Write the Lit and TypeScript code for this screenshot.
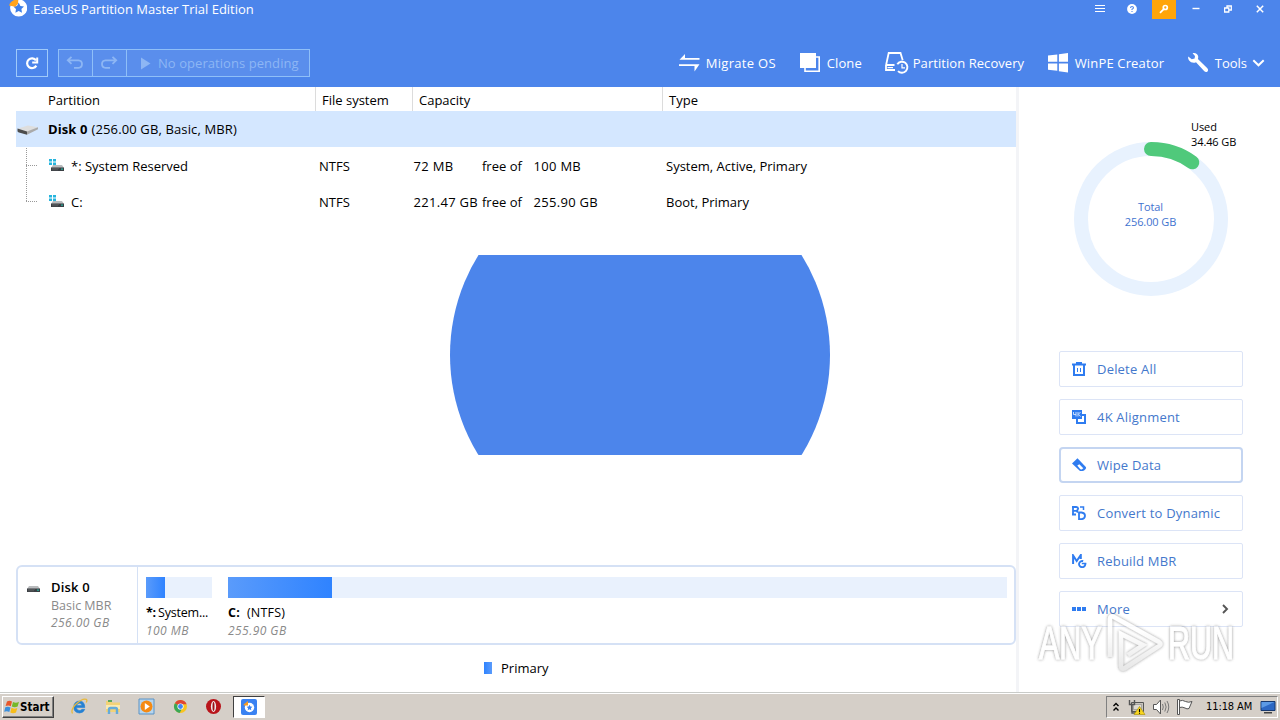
import { LitElement, html, css, svg } from "lit";
import { customElement, property } from "lit/decorators.js";

interface Partition {
    name: string;
    fs: string;
    free: string;
    total: string;
    type: string;
}

const partitions: Partition[] = [
    { name: "*: System Reserved", fs: "NTFS", free: "72 MB", total: "100 MB", type: "System, Active, Primary" },
    { name: "C:", fs: "NTFS", free: "221.47 GB", total: "255.90 GB", type: "Boot, Primary" },
];

const icons: Record<string, any> = {
    migrate: html`<svg width="22" height="22" viewBox="0 0 22 22">
      <path d="M.5 7.800 6 2v4h14.500v1.800zM0 12.200h20.500L15.500 19.500v-5.500H0z" fill="#fff"/></svg>`,
    clone: html`<svg width="22" height="22" viewBox="0 0 22 22">
      <path d="M5 16v3.200h14.200V5H16" fill="none" stroke="#fff" stroke-width="1.600"/>
      <path d="M0 1h16v15H0z" fill="#fff"/></svg>`,
    recovery: html`<svg width="24" height="24" viewBox="0 0 24 24" fill="none" stroke="#fff">
      <path d="M1.200 13.500 3.700 2h11.800l2.200 7.200M1 13.500V19h9M1 14h8.500" stroke-width="1.800"/>
      <path d="M2.500 16.600h5.500" stroke-width="1.200"/>
      <path d="M12.300 13.200A5.500 5.500 0 1 1 13 20.100" stroke-width="1.900"/>
      <path d="M17 13v3.800h3" stroke-width="1.200"/></svg>`,
    winpe: html`<svg width="22" height="22" viewBox="0 0 22 22" fill="#fff">
      <path d="M0 3.600 9.300 2.600v7.200H0zM10.900 2.300 20 1v8.800h-9.100zM0 11.600h9.300v7.200L0 17.800zM10.900 11.600H20v9l-9.100-1.400z"/></svg>`,
    tools: html`<svg width="22" height="22" viewBox="0 0 22 22" fill="#fff">
      <path d="M4.600 1.200C7.300.4 9.800 2 10.200 4.500c.1.9 0 1.800-.3 2.600l9.200 8.800c1.300 1.300 1.200 2.700.4 3.500-.9.9-2.400.8-3.400-.3L8 10.200C5.700 11.300 2.600 10.600.9 8.200.2 7 0 5.600.2 4.400l3.600 2.900 2.800-.7.4-2.600z"/></svg>`,
    delete: html`<svg width="14" height="14" viewBox="0 0 14 14" fill="none" stroke="#2f7cf0">
      <path d="M0 2.500h14M4 1h6" stroke-width="2"/><path d="M2 3v10h10V3" stroke-width="2"/>
      <path d="M5.500 6v4M8.500 6v4"/></svg>`,
    align: html`<svg width="14" height="14" viewBox="0 0 14 14">
      <path d="M5 7v6h8V5H8" fill="none" stroke="#2f7cf0" stroke-width="2"/>
      <path d="M0 0h10v9H0z" fill="#2f7cf0"/>
      <path d="M1.500 2v2.500H4M4 2v4.500M6 2v4.500M8.500 2 6.500 4.200 8.500 6.500" fill="none" stroke="#d8e8ff" stroke-width=".9"/></svg>`,
    wipe: html`<svg width="15" height="14" viewBox="0 0 15 14">
      <path d="M5.500.3 13.800 9q.8 1-.2 2l-1.200 1.200q-.8.8-2 .8H8L0 5.500z" fill="#2f7cf0"/>
      <path d="M5.300 7.500 7.300 6.300 11.300 10.300 9.700 11.500 8.300 11.200z" fill="#fff"/></svg>`,
    convert: html`<svg width="14" height="14" viewBox="0 0 14 14" fill="none" stroke="#2f7cf0" stroke-width="1.800">
      <path d="M1 1v8M0 1h4.200q2 .3 1.900 1.700Q6 4.500 4 4.800H1M4 4.800q1.600.2 1.600 2M0 8.500h4"/>
      <path d="M7 13.200V6.500h2.500q3.500.3 3.500 3.300T9.500 13.200z"/><path d="M8 1h3.500v3" stroke-width="1.500"/></svg>`,
    rebuild: html`<svg width="15" height="14" viewBox="0 0 15 14" fill="none" stroke="#2f7cf0">
      <path d="M1.100 10V1.500L4.700 7 8.800 1v4" stroke-width="2"/>
      <path d="M13.200 9.500a3.100 3.100 0 1 1-2-2.300" stroke-width="1.900"/><path d="M9.800 9.500h4.500" stroke-width="1.500"/></svg>`,
    more: html`<svg width="14" height="14" viewBox="0 0 14 14" fill="#2f7cf0">
      <path d="M0 5h4v4H0zM5 5h4v4H5zM10 5h4v4h-4z"/></svg>`,
};

// small drive glyph; the Windows mark is drawn only for volumes
const drive = (win: boolean) => html`<svg width="16" height="14" viewBox="0 0 16 14">
  ${win ? svg`<path d="M0 0h3v2.500H0zM4 0h3v2.500H4zM0 3.500h3V6H0zM4 3.500h3V6H4z" fill="#25b4dd"/>` : ""}
  <path d="M4 6h9l2 3H2z" fill="#b9bbbd"/>
  <path d="M2 8.500h13V12H2z" fill="#3b3f44"/>
  <path d="M3 9.300h7M3 10.800h6" stroke="#777" stroke-width=".5"/>
  <path d="M12 9.600h2v1.200h-2z" fill="#27b09b"/>
</svg>`;

@customElement("action-button")
export class ActionButton extends LitElement {
    @property({ type: String }) icon = "";
    @property({ type: String }) label = "";
    @property({ type: Boolean }) active = false;
    @property({ type: Boolean }) arrow = false;

    static styles = css`
    :host { display: block; }
    .btn {
      box-sizing: border-box;
      height: 36px;
      display: flex;
      align-items: center;
      border: 1px solid #dce4f6;
      border-radius: 2px;
      padding: 0 13px 0 12px;
      color: #4478cc;
      font: 13px "Open Sans", "Noto Sans", sans-serif;
      letter-spacing: 0.2px;
    }
    .btn.active {
      border: 2px solid #c4d5f1;
      border-radius: 4px;
      padding: 0 12px 0 11px;
    }
    .icon { width: 25px; height: 14px; }
    .label { flex: 1; }
  `;

    render() {
        return html`
      <div class="btn ${this.active ? "active" : ""}">
        <span class="icon">${icons[this.icon]}</span>
        <span class="label">${this.label}</span>
        ${this.arrow ? html`<svg width="8" height="10" viewBox="0 0 8 10">
          <path d="M2 1l4 4-4 4" fill="none" stroke="#555" stroke-width="1.900"/></svg>` : ""}
      </div>
    `;
    }
}

@customElement("task-bar")
export class TaskBar extends LitElement {
    static styles = css`
    :host { display: block; }
    .bar {
      box-sizing: border-box;
      height: 28px;
      background: #d5cfc8;
      border-top: 1px solid #c9cbc8;
      box-shadow: inset 0 1px #fff;
      display: flex;
      align-items: center;
      padding: 2px 2px 2px;
      font: 11px "DejaVu Sans Condensed", "DejaVu Sans", sans-serif;
      color: #000;
    }
    .start {
      box-sizing: border-box;
      width: 52px;
      height: 22px;
      display: flex;
      align-items: center;
      padding-left: 1px;
      border: 1px solid;
      border-color: #fff #404040 #404040 #fff;
      box-shadow: inset -1px -1px #808080;
      font-weight: bold;
      font-size: 11.5px;
    }
    .quick { display: flex; align-items: center; margin-left: 17px; gap: 16.5px; }
    .quick svg { display: block; }
    .running {
      box-sizing: border-box;
      width: 32px;
      height: 22px;
      margin-left: 11px;
      display: flex;
      align-items: center;
      justify-content: center;
      background: #fff;
      border: 1px solid;
      border-color: #404040 #fff #fff #404040;
    }
    .tray {
      box-sizing: border-box;
      margin-left: auto;
      width: 172px;
      height: 22px;
      display: flex;
      align-items: center;
      border: 1px solid;
      border-color: #808080 #fff #fff #808080;
      padding-left: 5px;
    }
    .tray svg { display: block; flex: none; }
    .clock { width: 54px; padding-left: 11px; letter-spacing: -0.1px; white-space: nowrap; }
  `;

    render() {
        return html`
      <div class="bar">
        <div class="start">
          <svg width="16" height="16" viewBox="0 0 16 16">
            <path d="M3 2.500Q5.500 1 8 2.600L6.800 7.200Q4.500 5.800 1.600 7z" fill="#e8572a"/>
            <path d="M9 3Q12 4.500 15 2.800L13.600 7.600Q10.500 9 7.800 7.500z" fill="#76b82a"/>
            <path d="M1.300 8.200Q4 7 6.500 8.500L5.300 13Q3 11.800.2 12.800z" fill="#3b8fdc"/>
            <path d="M7.500 8.800Q10 10.400 13.300 8.900L12 13.500Q9 15 6.300 13.400z" fill="#f7bd1a"/>
          </svg>
          <span>Start</span>
        </div>
        <div class="quick">
          <svg width="17" height="17" viewBox="0 0 17 17">
            <path d="M13.800 9.500H5.500q.2 3 3 3 1.700 0 2.400-1.200h2.900Q12.600 15 8.400 15 2.800 14.700 2.800 9T8.600 3q5 0 5.200 6.500zM5.600 7.600h5.300Q10.600 5.300 8.400 5.300T5.600 7.600z" fill="#2581d3" stroke="#2581d3" stroke-width=".6"/>
            <path d="M1.500 15.500Q-.5 12 4.500 6.500 11.500-.2 15.300 1.300q1.200.8-.1 3.200" fill="none" stroke="#e8b93b" stroke-width="1.300"/>
          </svg>
          <svg width="17" height="17" viewBox="0 0 17 17">
            <path d="M1 3h5l1.500 1.500H15V14H1z" fill="#f2d277"/><path d="M3 2h4v2H3z" fill="#5aa75b"/>
            <path d="M1 7h14v4H1z" fill="#faeab1"/>
            <path d="M4 16v-4.500q0-1.500 1.500-1.500h5q1.500 0 1.500 1.500V16" fill="none" stroke="#65abd9" stroke-width="2.400"/>
          </svg>
          <svg width="17" height="17" viewBox="0 0 17 17">
            <path d="M1 1h15v15H1z" fill="#b6d5ee" stroke="#5a93c5"/>
            <circle cx="8.500" cy="8.500" r="6" fill="#f58a13"/><path d="M6.800 5v7l5-3.500z" fill="#fff"/>
          </svg>
          <svg width="17" height="17" viewBox="0 0 17 17">
            <circle cx="8.500" cy="8.500" r="6.500" fill="#f9c41f"/>
            <path d="M8.500 8.500 2.900 5.200A6.500 6.500 0 0 1 14.600 6.200H8.500z" fill="#df4634"/>
            <path d="M8.500 8.500 2.900 5.200A6.500 6.500 0 0 0 7.600 15L10.500 10z" fill="#3aa757"/>
            <circle cx="8.500" cy="8.500" r="3.100" fill="#fff"/><circle cx="8.500" cy="8.500" r="2.400" fill="#4285f4"/>
          </svg>
          <svg width="17" height="17" viewBox="0 0 17 17">
            <circle cx="8.500" cy="8.500" r="7.500" fill="#b9151b"/>
            <ellipse cx="8.500" cy="8.500" rx="2.600" ry="5.400" fill="#eee"/>
            <ellipse cx="8.500" cy="8.500" rx="1" ry="4.500" fill="#9d1117"/>
          </svg>
        </div>
        <div class="running">
          <svg width="16" height="16" viewBox="0 0 16 16">
            <rect width="16" height="16" rx="2" fill="#3a82f2"/>
            <circle cx="8.500" cy="8.500" r="4.700" fill="#fff"/>
            <path d="m8.500 5.800.9 1.800 2 .2-1.500 1.400.4 2-1.800-1-1.800 1 .4-2-1.500-1.400 2-.2z" fill="#3a82f2"/>
            <path d="M2.500 5.500 7 2v4.500H3z" fill="#f59a23"/>
          </svg>
        </div>
        <div class="tray">
          <svg width="10" height="16" viewBox="0 0 10 16" fill="none" stroke="#000" stroke-width="1.400">
            <path d="M1.500 7 4 4.500 6.500 7M1.500 11.500 4 9l2.500 2.500"/>
          </svg>
          <svg width="24" height="18" viewBox="0 0 24 18">
            <path d="M9.500 4.500h12v9h-12z" fill="#c9c5bd" stroke="#555"/>
            <path d="M11.500 6.500h8v5h-8z" fill="#dedbd2" stroke="#888" stroke-width=".6"/>
            <path d="M7.500 2v4.500h5V2M10 6.500V15h6" fill="none" stroke="#555" stroke-width="1.400"/>
            <path d="M17.500 8.500 23 16.500H12z" fill="#f8d51f" stroke="#a68b00" stroke-width=".6"/>
            <path d="M17.500 11v3M17.500 14.700v1" stroke="#000" stroke-width="1.100"/>
          </svg>
          <svg width="25" height="18" viewBox="0 0 25 18" fill="none" stroke="#777">
            <path d="M7.500 6.500h3l4-4.500v14l-4-4.500h-3z" fill="#fff" stroke="#555"/>
            <path d="M16.500 6q1.500 3 0 6M18.800 4.500q2.700 4.500 0 9M21 3q3.500 6 0 12"/>
          </svg>
          <svg width="24" height="18" viewBox="0 0 24 18" fill="#fff" stroke="#555">
            <path d="M6.500 1.500h2v15h-2zM8.500 3q3-1.500 6 .5 3 1.500 6.500 0l-3 7q-2 1-4-.5-3-1.500-5.500-.5z"/>
          </svg>
          <span class="clock">11:18 AM</span>
          <svg width="16" height="16" viewBox="0 0 16 16">
            <path d="M1 2.500h14v9H1z" fill="#2d68c4" stroke="#17386f"/>
            <path d="M1.500 3h13L1.500 9z" fill="#5c9ae6"/><path d="M4 13h8v1.500H4z" fill="#444"/>
          </svg>
        </div>
      </div>
    `;
    }
}

@customElement("app-root")
export class AppRoot extends LitElement {
    static styles = css`
    :host {
      display: flex;
      flex-direction: column;
      position: relative;
      width: 1280px;
      height: 720px;
      overflow: hidden;
      background: #fff;
      color: #000;
      font: 13px "Open Sans", "Noto Sans", sans-serif;
      white-space: nowrap;
    }
    svg { display: block; flex: none; }

    .header { height: 87px; background: #4c85eb; color: #fff; }
    .titlebar { display: flex; height: 19px; padding: 0 8px 0 9px; }
    .title { flex: 1; padding-left: 6px; line-height: 18px; }
    .controls { display: flex; gap: 8px; }
    .control { width: 24px; height: 17px; padding-bottom: 2px; display: flex; align-items: center; justify-content: center; }
    .control.key { background: #ffa50a; }

    .toolbar { display: flex; align-items: center; height: 28px; padding: 30px 15px 0 16px; }
    .box {
      box-sizing: border-box;
      height: 28px;
      display: flex;
      align-items: center;
      border: 1px solid #9fcafa;
    }
    .refresh { width: 32px; justify-content: center; margin-right: 10px; }
    .ops { width: 252px; background: #5a8eec; border-color: #8fbff8; color: #8db6f4; letter-spacing: 0.06px; }
    .op {
      width: 33px;
      height: 26px;
      display: flex;
      align-items: center;
      justify-content: center;
      border-right: 1px solid #8fbff8;
    }
    .op svg { margin-right: 2px; }
    .pending { display: flex; align-items: center; padding-left: 13px; gap: 7px; }
    .links { display: flex; margin-left: auto; }
    .link { display: flex; align-items: center; }
    .link svg { margin-right: 5px; }
    .link.migrate { width: 121px; letter-spacing: 0.3px; }
    .link.clone { width: 85px; letter-spacing: 0.1px; }
    .link.recovery { width: 163px; letter-spacing: 0.06px; }
    .link.recovery svg { margin-right: 4px; }
    .link.winpe { width: 140px; letter-spacing: 0.15px; }
    .link .chev { margin: 0 0 0 5px; }

    .main { display: flex; height: 605px; }
    .left { width: 1016px; display: flex; flex-direction: column; }
    .right {
      flex: 1;
      display: flex;
      flex-direction: column;
      border-left: 3px solid #f3f4f7;
    }

    .cols, .row { display: grid; grid-template-columns: 315px 97px 250px 1fr; align-items: center; }
    .cols { height: 24px; line-height: 27px; }
    .cols > div { height: 24px; border-left: 1px solid #dcdcdc; padding-left: 6px; }
    .cols > div:first-child { border: 0; padding-left: 48px; }
    .disk {
      height: 36px;
      margin-left: 16px;
      display: flex;
      align-items: center;
      background: #d4e7ff;
      letter-spacing: 0.13px;
    }
    .disk svg { margin-right: 10px; }
    .disk b { letter-spacing: 0.1px; margin-right: 4px; }
    .rows { padding-top: 1px; }
    .row { height: 36px; }
    .name { display: flex; align-items: center; padding-left: 26px; height: 36px; }
    .label { padding-left: 6px; }
    .fs { padding-left: 4px; }
    .cap { display: grid; grid-template-columns: 68.5px 51.5px 1fr; padding-left: 1.5px; }
    .size { letter-spacing: 0.3px; }
    .type { padding-left: 4px; }

    .splash {
      width: 380px;
      height: 200px;
      margin: 35px 0 0 450px;
      background: #4c85eb;
      clip-path: circle(190px at 50% 50%);
    }

    .map {
      box-sizing: border-box;
      width: 1000px;
      height: 80px;
      margin: 110px 0 0 16px;
      display: flex;
      border: 2px solid #d5e1f5;
      border-radius: 6px;
    }
    .info {
      width: 119px;
      display: flex;
      border-right: 1px solid #d5e1f5;
      color: #8a8a8a;
      font-size: 12.5px;
    }
    .info svg { margin: 13px 10px 0 7px; }
    .info .lines { padding-top: 10px; line-height: 17px; }
    .info b { display: block; color: #000; font-size: 13px; line-height: 20px; font-weight: 600; letter-spacing: 0.2px; }
    .info i, .vol i { font-size: 12px; color: #8a8a8a; letter-spacing: 0.45px; }
    .vol { margin-left: 8px; padding-top: 10px; }
    .vol + .vol { margin-left: 16px; }
    .vol.small { width: 66px; }
    .vol.big { width: 779px; }
    .track { height: 21px; background: #e9f1fd; margin-bottom: 5px; }
    .fill { height: 21px; background: linear-gradient(90deg, #5a9bfb, #2f83ff); }
    .caption { display: flex; gap: 2px; line-height: 20px; font-size: 12.5px; }
    .small .caption { letter-spacing: -0.2px; }
    .big .caption { gap: 7px; letter-spacing: 0.2px; }
    .vol i { display: block; line-height: 15px; }

    .legend { display: flex; align-items: center; gap: 9px; padding: 13px 0 0 484px; height: 20px; }
    .swatch { width: 8px; height: 12px; margin-top: -1px; background: linear-gradient(90deg, #2f83ff, #5a9bfb); }

    .donut { height: 264px; }
    .tag { font-size: 11px; letter-spacing: -0.1px; }
    .actions { display: grid; gap: 12px; width: 184px; margin-left: 40px; }

    .watermark { position: absolute; left: 1030px; top: 606px; }
    .mark { font: 47px "Liberation Sans", sans-serif; }
  `;

    renderHeader() {
        return html`
      <div class="header">
        <div class="titlebar">
          <svg width="18" height="18" viewBox="0 0 18 18">
            <circle cx="9.700" cy="8" r="8.600" fill="#fff"/>
            <path d="M9.700 2.600 11.400 6l3.600.5-2.600 2.600.6 3.700-3.300-1.800-3.300 1.800L7 9.100 4.400 6.500 8 6z" fill="#3e7fe8"/>
            <path d="M0 5.500Q1.500 1 5.500 0h3.800L9 3.500 6.500 6.800z" fill="#ffa41c"/>
          </svg>
          <div class="title">EaseUS Partition Master Trial Edition</div>
          <div class="controls">
            <div class="control"><svg width="10" height="9" viewBox="0 0 10 9"><path d="M0 1.500h10M0 4.500h10M0 7.500h10" stroke="#fff" stroke-width="1.200"/></svg></div>
            <div class="control"><svg width="10" height="10" viewBox="0 0 10 10"><circle cx="5" cy="5" r="4.900" fill="#fff"/><path d="M3.500 4q.1-1.500 1.500-1.500T6.500 3.800Q6.500 4.600 5 5.300v.7M5 6.900v1.200" fill="none" stroke="#4c85eb" stroke-width="1.100"/></svg></div>
            <div class="control key"><svg width="10" height="10" viewBox="0 0 10 10" fill="none" stroke="#fff"><circle cx="6.300" cy="3.500" r="2" stroke-width="1.700"/><path d="M5 4.800 1 8.800" stroke-width="1.800"/></svg></div>
            <div class="control"><svg width="8" height="9" viewBox="0 0 8 9"><path d="M.5 4.500h7" stroke="#fff" stroke-width="1.400"/></svg></div>
            <div class="control"><svg width="8" height="8" viewBox="0 0 8 8" fill="none" stroke="#fff" stroke-width="1.300"><path d="M.6 3h4.200v4H.6zM3 3V1h4.300v4H5"/></svg></div>
            <div class="control"><svg width="8" height="8" viewBox="0 0 8 8"><path d="m.8.8 6.400 6.400M7.200.8.8 7.200" stroke="#fff" stroke-width="1.500"/></svg></div>
          </div>
        </div>
        <div class="toolbar">
          <div class="box refresh">
            <svg width="14" height="14" viewBox="0 0 14 14" fill="none" stroke="#fff">
              <path d="M11.300 9.600A4.900 4.900 0 1 1 11 4.400" stroke-width="2.200"/>
              <path d="M7.200 6.500h5V1.600" stroke-width="2"/>
            </svg>
          </div>
          <div class="box ops">
            <div class="op"><svg width="18" height="14" viewBox="0 0 18 14" fill="none" stroke="#8db6f4" stroke-width="1.800"><path d="M5.500.8 1.800 4.300l3.700 3.500M2 4.300h10.500q3.500.2 3.500 3.800t-3.500 3.800H8"/></svg></div>
            <div class="op"><svg width="18" height="14" viewBox="0 0 18 14" fill="none" stroke="#8db6f4" stroke-width="1.800"><path d="m12.500.8 3.700 3.500-3.700 3.500M16 4.300H5.500Q2 4.500 2 8.100t3.500 3.800H10"/></svg></div>
            <div class="pending">
              <svg width="11" height="13" viewBox="0 0 11 13"><path d="M1 .5v12l9.500-6z" fill="#8db6f4"/></svg>
              No operations pending
            </div>
          </div>
          <div class="links">
            <div class="link migrate">${icons.migrate}Migrate OS</div>
            <div class="link clone">${icons.clone}Clone</div>
            <div class="link recovery">${icons.recovery}Partition Recovery</div>
            <div class="link winpe">${icons.winpe}WinPE Creator</div>
            <div class="link">${icons.tools}Tools
              <svg class="chev" width="13" height="8" viewBox="0 0 13 8"><path d="m1.300 1.300 5.200 5 5.200-5" fill="none" stroke="#fff" stroke-width="2"/></svg>
            </div>
          </div>
        </div>
      </div>
    `;
    }

    renderTable() {
        return html`
      <div class="cols"><div>Partition</div><div>File system</div><div>Capacity</div><div>Type</div></div>
      <div class="disk">
        <svg width="22" height="14" viewBox="0 0 22 14">
          <path d="M2 6.500 12 3.500l10 1.700-11 5z" fill="#dedede"/>
          <path d="M1.500 6.500 11 9.500v3.200L3 10.500q-1.500-.5-1.500-1.500z" fill="#4c4c4c"/>
          <path d="m11 9.500 11-4.300v2l-11 5.500z" fill="#aaa"/>
        </svg>
        <b>Disk 0</b><span>(256.00 GB, Basic, MBR)</span>
      </div>
      <div class="rows">
        ${partitions.map((p, i) => html`
          <div class="row">
            <div class="name">
              <svg width="23" height="36" viewBox="0 0 23 36">
                <path d="M.5 0v${i === partitions.length - 1 ? 18 : 36}M0 17.500h11" fill="none" stroke="#999" stroke-dasharray="1 1"/>
              </svg>
              ${drive(true)}
              <span class="label">${p.name}</span>
            </div>
            <div class="fs">${p.fs}</div>
            <div class="cap"><span class="size">${p.free}</span><span>free of</span><span class="size">${p.total}</span></div>
            <div class="type">${p.type}</div>
          </div>
        `)}
      </div>
    `;
    }

    render() {
        return html`
      ${this.renderHeader()}
      <div class="main">
        <div class="left">
          ${this.renderTable()}
          <div class="splash"></div>
          <div class="map">
            <div class="info">
              ${drive(false)}
              <div class="lines"><b>Disk 0</b>Basic MBR<br><i>256.00 GB</i></div>
            </div>
            <div class="vol small">
              <div class="track"><div class="fill" style="width: 19px"></div></div>
              <div class="caption"><b>*:</b><span>System...</span></div>
              <i>100 MB</i>
            </div>
            <div class="vol big">
              <div class="track"><div class="fill" style="width: 104px"></div></div>
              <div class="caption"><b>C:</b><span>(NTFS)</span></div>
              <i>255.90 GB</i>
            </div>
          </div>
          <div class="legend"><span class="swatch"></span>Primary</div>
        </div>
        <div class="right">
          <div class="donut">
            <svg width="261" height="264" viewBox="1019 87 261 264">
              <circle cx="1151" cy="219" r="70" fill="none" stroke="#e8f2fe" stroke-width="14"/>
              <path d="M1151 149a70 70 0 0 1 41.300 13.300" fill="none" stroke="#50c97b" stroke-width="14" stroke-linecap="round"/>
              <text class="tag" x="1191" y="131">Used</text>
              <text class="tag" x="1191" y="146">34.46 GB</text>
              <text class="tag" x="1150.500" y="211" text-anchor="middle" fill="#3f73cf">Total</text>
              <text class="tag" x="1150.500" y="226" text-anchor="middle" fill="#3f73cf">256.00 GB</text>
            </svg>
          </div>
          <div class="actions">
            <action-button icon="delete" label="Delete All"></action-button>
            <action-button icon="align" label="4K Alignment"></action-button>
            <action-button icon="wipe" label="Wipe Data" active></action-button>
            <action-button icon="convert" label="Convert to Dynamic"></action-button>
            <action-button icon="rebuild" label="Rebuild MBR"></action-button>
            <action-button icon="more" label="More" arrow></action-button>
          </div>
        </div>
      </div>
      <task-bar></task-bar>
      <svg class="watermark" width="250" height="72" viewBox="1030 606 250 72">
        <defs>
          <linearGradient id="fade" x1="0" y1="614" x2="0" y2="672" gradientUnits="userSpaceOnUse">
            <stop offset=".3" stop-color="#fff"/>
            <stop offset="1" stop-color="#e2e2e2"/>
          </linearGradient>
          <filter id="glow" x="-10%" y="-20%" width="120%" height="140%">
            <feDropShadow dx="0" dy="0" stdDeviation="1.500" flood-color="#555" flood-opacity=".75"/>
          </filter>
        </defs>
        <g filter="url(#glow)" fill="url(#fade)" stroke="url(#fade)" opacity=".85">
          <g class="mark">
            <text transform="translate(1039 659) scale(.65 1)" stroke-width="1">ANY</text>
            <text transform="translate(1168 659) scale(.65 1)" stroke-width="1">RUN</text>
          </g>
          <path d="M1110 657V619q0-4 4-2l45 25q3 2 0 4l-34 22q-4 2-4-2V634l22 11-15 10" fill="none" stroke-width="4.500"/>
        </g>
      </svg>
    `;
    }
}

declare global {
    interface HTMLElementTagNameMap {
        "app-root": AppRoot;
        "action-button": ActionButton;
        "task-bar": TaskBar;
    }
}
